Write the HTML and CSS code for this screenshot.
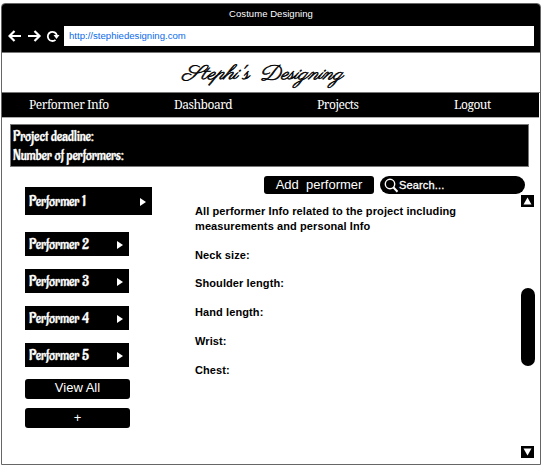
FILE: index.html
```html
<!DOCTYPE html>
<html lang="en">
<head>
<meta charset="utf-8">
<title>Costume Designing</title>
<link rel="stylesheet" href="styles.css">
</head>
<body>
<div class="window">
  <header class="chrome">
    <div class="title">Costume Designing</div>
    <div class="toolbar">
      <svg class="controls" width="52" height="14" viewBox="0 0 52 14">
        <path d="M13 7H2M6.500 2L1.500 7l5 5M20 7h11M26.500 2l5 5-5 5" fill="none" stroke="#fff" stroke-width="2.200"/>
        <path d="M47.500 10.800A4.600 4.600 0 1 1 48.900 6.500" fill="none" stroke="#fff" stroke-width="1.800"/>
        <path d="M45.500 6h6l-3 4z" fill="#fff"/>
      </svg>
      <div class="address">http://stephiedesigning.com</div>
    </div>
  </header>
  <div class="brand">
    <svg width="170" height="38" viewBox="0 0 170 38">
      <text class="script" x="5" y="26" textLength="67" lengthAdjust="spacingAndGlyphs">Stephi's</text>
      <text class="script" x="83" y="26" textLength="83" lengthAdjust="spacingAndGlyphs">Designing</text>
    </svg>
  </div>
  <nav class="nav">
    <a>Performer Info</a>
    <a>Dashboard</a>
    <a>Projects</a>
    <a>Logout</a>
  </nav>
  <section class="project">
    <svg width="130" height="42" viewBox="0 0 130 42">
      <text class="fancy" x="2" y="15.500" textLength="81" lengthAdjust="spacingAndGlyphs">Project deadline:</text>
      <text class="fancy" x="2" y="34.500" textLength="111" lengthAdjust="spacingAndGlyphs">Number of performers:</text>
    </svg>
  </section>
  <main class="body">
    <aside class="side">
      <div class="performer active"><svg width="70" height="24"><text class="fancy" x="0" y="17" textLength="57" lengthAdjust="spacingAndGlyphs">Performer 1</text></svg><i class="arrow"></i></div>
      <div class="performer"><svg width="70" height="24"><text class="fancy" x="0" y="17" textLength="60" lengthAdjust="spacingAndGlyphs">Performer 2</text></svg><i class="arrow"></i></div>
      <div class="performer"><svg width="70" height="24"><text class="fancy" x="0" y="17" textLength="60" lengthAdjust="spacingAndGlyphs">Performer 3</text></svg><i class="arrow"></i></div>
      <div class="performer"><svg width="70" height="24"><text class="fancy" x="0" y="17" textLength="60" lengthAdjust="spacingAndGlyphs">Performer 4</text></svg><i class="arrow"></i></div>
      <div class="performer"><svg width="70" height="24"><text class="fancy" x="0" y="17" textLength="60" lengthAdjust="spacingAndGlyphs">Performer 5</text></svg><i class="arrow"></i></div>
      <button class="button view">View All</button>
      <button class="button plus">+</button>
    </aside>
    <section class="detail">
      <div class="actions">
        <button class="button add">Add&nbsp; performer</button>
        <div class="search">
          <svg width="15" height="15" viewBox="0 0 15 15" fill="none" stroke="#fff"><circle cx="6" cy="6" r="4.700" stroke-width="1.400"/><path d="M9.300 9.300l4.200 4.400" stroke-width="2"/></svg>
          <span>Search...</span>
        </div>
      </div>
      <div class="info">
        <p class="intro">All performer Info related to the project including<br>measurements and personal Info</p>
        <p>Neck size:</p>
        <p class="shoulder">Shoulder length:</p>
        <p>Hand length:</p>
        <p>Wrist:</p>
        <p>Chest:</p>
      </div>
    </section>
    <div class="scroll">
      <svg class="step" width="13" height="12" viewBox="0 0 13 12"><path d="M6.500 2.500l4 7h-8z" fill="#fff"/></svg>
      <div class="thumb"></div>
      <svg class="step" width="13" height="12" viewBox="0 0 13 12"><path d="M6.500 9.500l4-7h-8z" fill="#fff"/></svg>
    </div>
  </main>
</div>
</body>
</html>
```
FILE: styles.css
```css
* { box-sizing: border-box; }
body { margin: 0; background: #fff; font-family: "Liberation Sans", Arial, sans-serif; }
svg { display: block; flex: none; }
p { margin: 0; }
.window { width: 540px; height: 462px; margin: 3px 0 0 1px; border: 1px solid #666; border-radius: 4px 4px 0 0; overflow: hidden; }
.chrome { height: 48px; background: #000; }
.title { height: 22px; color: #fff; font-size: 9.5px; line-height: 20px; text-align: center; letter-spacing: 0.05px; }
.toolbar { display: flex; align-items: center; height: 20px; padding-left: 6px; }
.controls { margin-right: 4px; }
.address { width: 470px; height: 20px; padding-left: 5px; background: #fff; color: #0b6bea; font-size: 9.6px; line-height: 20px; }
.brand { height: 41px; padding-left: 175px; border-top: 1px solid #777; border-bottom: 1px solid #777; }
.script { font: italic 20px "Parisienne", "Dancing Script", "Z003", "URW Chancery L", "Liberation Serif", cursive; fill: #000; stroke: #000; stroke-width: 0.5px; }
.nav { display: grid; grid-template-columns: 145px 143px 137px 110px; width: 537px; height: 25px; padding-left: 27px; background: #000; border-bottom: 1px solid #aaa; color: #fff; font: 12px/24px "Noto Serif", "DejaVu Serif Condensed", "DejaVu Serif", serif; letter-spacing: -0.48px; white-space: nowrap; }
.project { width: 519px; height: 43px; margin: 6px 0 0 8px; background: #000; border: 1px solid #777; }
.fancy { font: 15px "Aladin", "Lato", sans-serif; fill: #fff; stroke: #fff; stroke-width: 0.3px; }
.body { display: flex; height: 293px; }
.side { width: 104px; margin: 20px 0 0 23px; }
.performer { display: flex; align-items: center; justify-content: space-between; width: 104px; height: 24px; margin-bottom: 13px; padding: 0 6px 0 4px; background: #000; }
.performer.active { width: 127px; height: 28px; margin-bottom: 17px; }
.performer:nth-child(5) { margin-bottom: 12px; }
.arrow { border-left: 6px solid #fff; border-top: 4.5px solid transparent; border-bottom: 4.5px solid transparent; position: relative; top: 1px; }
.button { display: block; padding: 0; border: 0; border-radius: 3px; background: #000; color: #fff; font: 13px/18px "Liberation Sans", Arial, sans-serif; }
.view, .plus { width: 105px; height: 20px; line-height: 16px; padding-bottom: 2px; }
.plus { margin-top: 9px; padding-bottom: 1px; }
.detail { width: 335px; margin-left: 66px; padding-top: 9px; }
.actions { display: flex; gap: 6px; margin-left: 69px; }
.add { width: 110px; height: 18px; line-height: 16px; padding-bottom: 1px; }
.search { display: flex; align-items: center; width: 145px; height: 18px; padding-left: 4px; border-radius: 9px; background: #000; color: #fff; font-size: 11px; -webkit-text-stroke: 0.3px #fff; letter-spacing: 0.15px; }
.info { color: #000; font-size: 11px; font-weight: bold; line-height: 15px; margin-top: 10px; white-space: nowrap; letter-spacing: 0.1px; }
.info p + p { margin-top: 14px; }
.info .shoulder { margin-top: 13px !important; }
.scroll { display: flex; flex-direction: column; justify-content: space-between; width: 13px; height: 263px; margin: 28px 0 0 -9px; }
.step { background: #000; }
.thumb { width: 14px; height: 78px; border-radius: 7px; background: #000; }
```
